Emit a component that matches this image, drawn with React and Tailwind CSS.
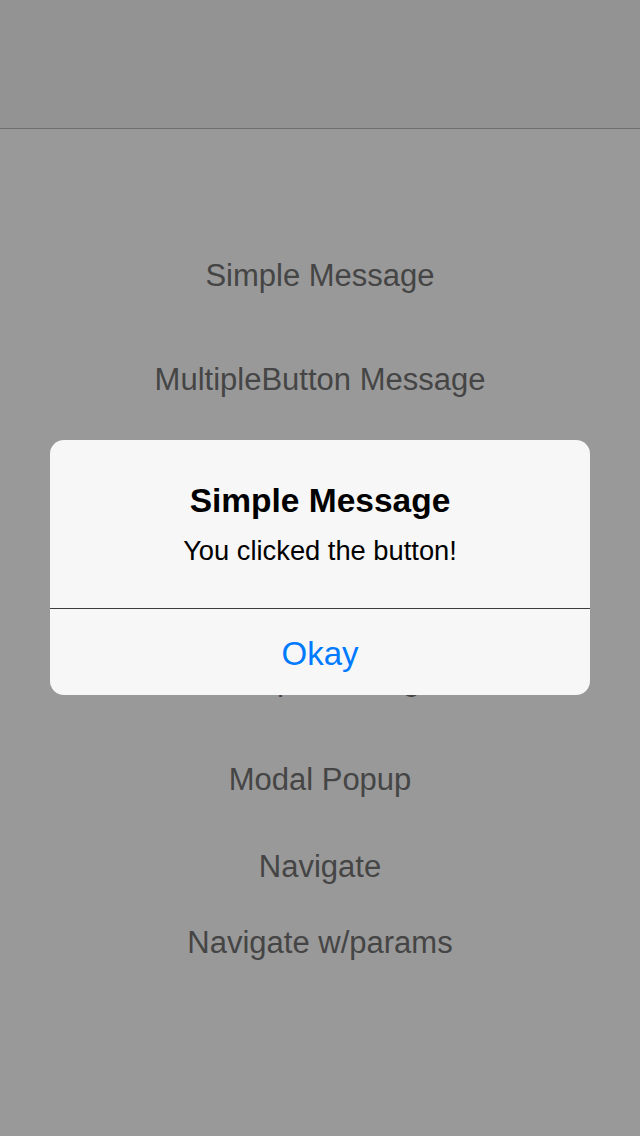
export default function App() {
  const font = { fontFamily: '"Liberation Sans", Arial, sans-serif' };
  return (
    <div className="relative w-[640px] h-[1136px] bg-[#999999] overflow-hidden" style={font}>
      <div className="h-[129px] bg-[#939393] border-b border-[#6f6f6f]" />
      <div className="flex flex-col items-center text-[31px] leading-[36px] text-[#454545]">
        <div className="mt-[129px]">Simple Message</div>
        <div className="mt-[68px]">MultipleButton Message</div>
        <div className="mt-[68px]">Confirm Message</div>
        <div className="mt-[68px]">Input Message</div>
        <div className="mt-[56px]">Prompt Message</div>
        <div className="mt-[64px]">Modal Popup</div>
        <div className="mt-[51px]">Navigate</div>
        <div className="mt-[40px]">Navigate w/params</div>
      </div>

      <div className="absolute left-[50px] top-[440px] w-[540px] h-[255px] bg-[#f7f7f7] rounded-[14px] flex flex-col overflow-hidden">
        <div className="pt-[41px] text-center text-[33.5px] leading-[40px] font-bold text-black">Simple Message</div>
        <div className="mt-[14px] text-center text-[27.3px] leading-[32px] text-black">You clicked the button!</div>
        <div className="mt-[41px] h-px bg-[#3d3d3d]" />
        <div className="flex-1 flex items-center justify-center pt-[3px] text-[33px] leading-[40px] text-[#007aff]">Okay</div>
      </div>
    </div>
  );
}
